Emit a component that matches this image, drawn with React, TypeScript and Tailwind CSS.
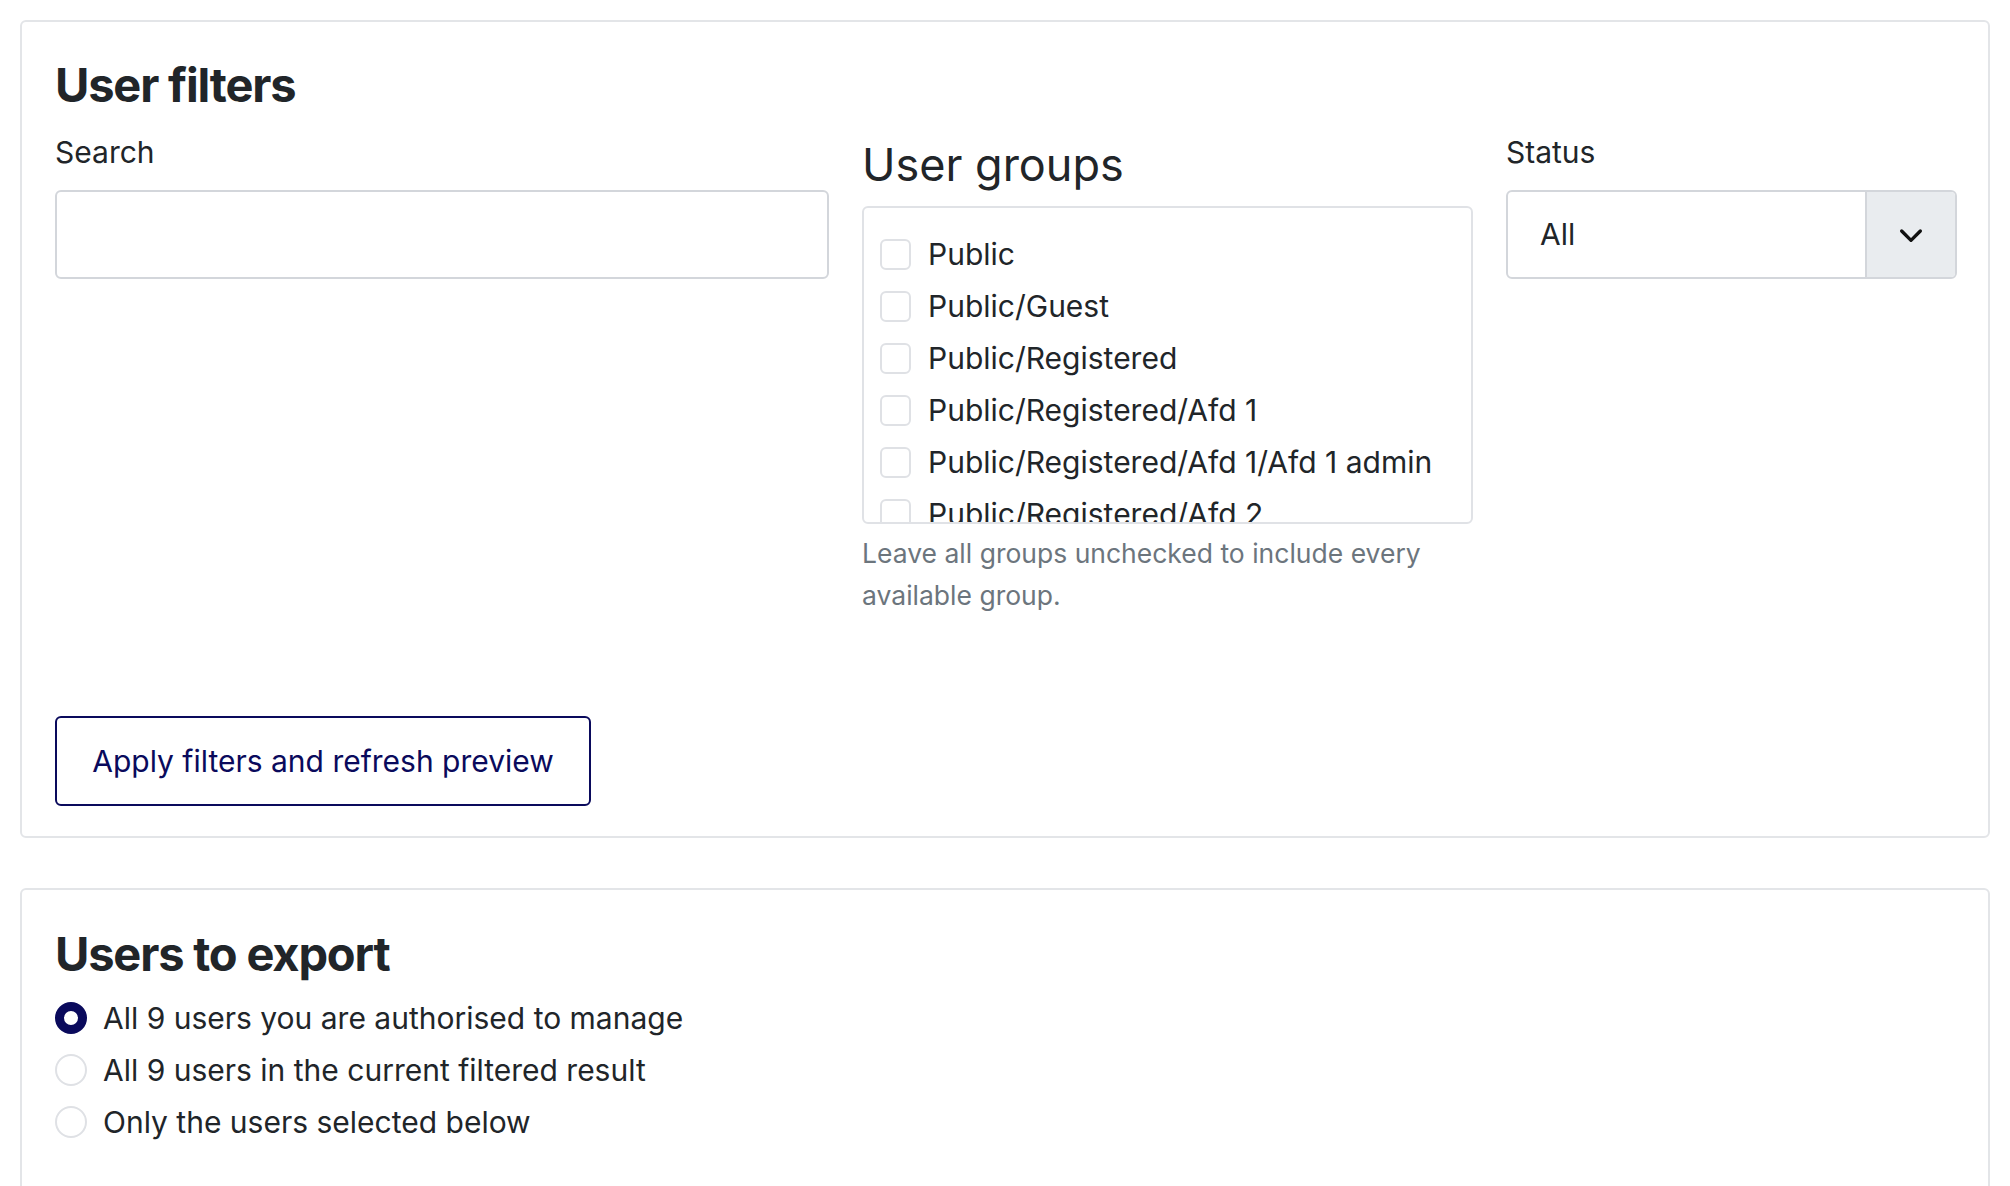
import React from "react";

const groups = [
  "Public",
  "Public/Guest",
  "Public/Registered",
  "Public/Registered/Afd 1",
  "Public/Registered/Afd 1/Afd 1 admin",
  "Public/Registered/Afd 2",
  "Public/Registered/Afd 2/Afd 2 admin",
];

const radios = [
  "All 9 users you are authorised to manage",
  "All 9 users in the current filtered result",
  "Only the users selected below",
];

export default function App() {
  return (
    <div className="bg-white text-[#212529] font-[Inter,sans-serif] w-[2010px] h-[1186px] overflow-hidden px-[20px] pt-[20px] text-[30px]">
      {/* Filters card */}
      <div className="border-2 border-[#e3e5e8] rounded-md px-[33px] pt-[30px] h-[818px]">
        <h2 className="text-[47px] font-bold leading-[66px] tracking-tight">User filters</h2>
        <div className="flex gap-[33px] mt-[14px]">
          <div className="w-[774px] shrink-0">
            <div className="leading-[40px]">Search</div>
            <div className="mt-[18px] h-[89px] border-2 border-[#d3d6db] rounded-md" />
          </div>
          <div className="w-[611px] shrink-0">
            <div className="text-[45px] leading-[54px] mt-[6px]">User groups</div>
            <div className="mt-[14px] h-[318px] border-2 border-[#e0e2e6] rounded-md overflow-hidden pl-[16px] pt-[20px]">
              {groups.map((g) => (
                <div key={g} className="flex items-center gap-[17px] h-[52px]">
                  <span className="w-[31px] h-[31px] rounded-md border-2 border-[#dfe1e5] shrink-0" />
                  <span className="whitespace-nowrap">{g}</span>
                </div>
              ))}
            </div>
            <p className="text-[26.5px] leading-[42px] text-[#6c757d] mt-[8px] pr-[30px]">
              Leave all groups unchecked to include every available group.
            </p>
          </div>
          <div className="w-[451px] shrink-0">
            <div className="leading-[40px]">Status</div>
            <div className="mt-[18px] h-[89px] border-2 border-[#d3d6db] rounded-md flex overflow-hidden">
              <div className="flex-1 flex items-center pl-[32px]">All</div>
              <div className="w-[90px] bg-[#e9ecef] border-l-2 border-[#d3d6db] flex items-center justify-center">
                <svg width="32" height="32" viewBox="0 0 24 24" fill="none" stroke="#111" strokeWidth="2.5" strokeLinecap="round" strokeLinejoin="round">
                  <path d="M5 9l7 7 7-7" />
                </svg>
              </div>
            </div>
          </div>
        </div>
        <button className="mt-[100px] h-[90px] w-[536px] border-2 border-[#0a0a5c] rounded-md text-[#0a0a5c] text-[30px]">
          Apply filters and refresh preview
        </button>
      </div>

      {/* Export card */}
      <div className="mt-[50px] border-2 border-[#e3e5e8] rounded-md px-[33px] pt-[32px] h-[400px]">
        <h2 className="text-[47px] font-bold leading-[64px] tracking-tight">Users to export</h2>
        <div className="mt-[6px]">
          {radios.map((r, i) => (
            <div key={r} className="flex items-center gap-[16px] h-[52px] text-[30px]">
              <span
                className={
                  i === 0
                    ? "w-[32px] h-[32px] rounded-full border-[9px] border-[#0a0a5c] bg-white shrink-0"
                    : "w-[32px] h-[32px] rounded-full border-2 border-[#dfe1e5] shrink-0"
                }
              />
              <span>{r}</span>
            </div>
          ))}
        </div>
      </div>
    </div>
  );
}
